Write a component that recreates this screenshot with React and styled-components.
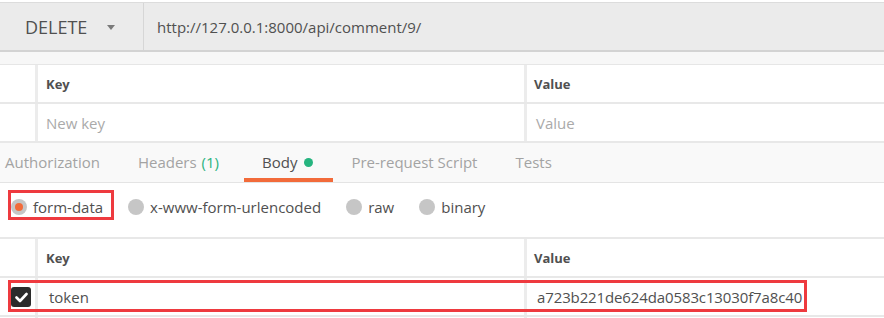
import React from 'react'
import styled, { createGlobalStyle } from 'styled-components';

const GlobalStyle = createGlobalStyle`
    body {
        margin: 0;
        background: #fff;
        font-family: "Open Sans", "Noto Sans", sans-serif;
        color: #505050;
    }
`;

const Page = styled.div`
    padding-top: 2px;
    width: 884px;
    height: 316px;
    overflow: hidden;
`;

const TopBar = styled.div`
    display: flex;
    height: 47px;
    background: #ebebeb;
    border-top: 1px solid #dcdcdc;
    border-bottom: 2px solid #d3d3d3;
`;

const Method = styled.div`
    display: flex;
    align-items: center;
    width: 144px;
    padding-left: 25px;
    box-sizing: border-box;
    border-right: 1px solid #d6d6d6;
    font-size: 18px;
    color: #505050;
`;

const Caret = styled.span`
    width: 0;
    height: 0;
    margin-left: 20px;
    margin-top: 2px;
    border-left: 4px solid transparent;
    border-right: 4px solid transparent;
    border-top: 5px solid #7a7a7a;
`;

const Url = styled.div`
    display: flex;
    align-items: center;
    padding-left: 13px;
    font-size: 15px;
    color: #505050;
`;

const Strip = styled.div`
    height: 12px;
    background: #f7f7f7;
    border-bottom: 1px solid #e6e6e6;
`;

const Row = styled.div`
    position: relative;
    display: grid;
    grid-template-columns: 35px 489px 1fr;
    height: 37px;
    border-bottom: 2px solid #e8e8e8;
    ${p => p.$top && 'border-top: 2px solid #e8e8e8;'}
`;

const Cell = styled.div`
    display: flex;
    align-items: center;
    padding-left: ${p => p.$pad || 8}px;
    border-left: 3px solid #ececec;
    font-size: 15px;
    color: ${p => p.$muted ? '#aaaaaa' : '#505050'};
    letter-spacing: ${p => p.$tight ? '-0.12px' : 'normal'};
    white-space: nowrap;
`;

const HeadCell = styled(Cell)`
    font-size: 13px;
    font-weight: 700;
    padding-top: 1px;
`;

const Lead = styled.div`
    display: flex;
    align-items: center;
    padding-left: 11px;
`;

const Check = styled.span`
    display: flex;
    align-items: center;
    justify-content: center;
    width: 20px;
    height: 20px;
    margin-top: 1px;
    border-radius: 3px;
    background: #2b2b2b;
`;

const Highlight = styled.div`
    position: absolute;
    left: ${p => p.$left}px;
    top: 2px;
    width: ${p => p.$width}px;
    height: 32px;
    box-sizing: border-box;
    border: 3px solid #ee3a3f;
    pointer-events: none;
`;

const Tabs = styled.div`
    display: flex;
    height: 39px;
    background: #f9f9f9;
    border-bottom: 1px solid #e4e4e4;
`;

const Tab = styled.div`
    display: flex;
    align-items: center;
    padding: 2px 20px 0 18px;
    font-size: 15px;
    color: ${p => p.$active ? '#505050' : '#a3a3a3'};
    border-bottom: 4px solid ${p => p.$active ? '#f26b3a' : 'transparent'};
    &:first-child { padding-left: 5px; }
`;

const Count = styled.span`
    color: #2bb37f;
    margin-left: 5px;
    margin-right: 5px;
`;

const Dot = styled.span`
    width: 9px;
    height: 9px;
    margin-left: 7px;
    margin-top: 2px;
    border-radius: 50%;
    background: #26b47f;
`;

const Radios = styled.div`
    display: flex;
    align-items: center;
    height: 54px;
    padding: 0 0 7px 11px;
    box-sizing: border-box;
    gap: 25px;
`;

const RadioItem = styled.label`
    position: relative;
    display: flex;
    align-items: center;
    gap: 6px;
    font-size: 15px;
    color: #505050;
    ${p => p.$marked && `
        &::after {
            content: '';
            position: absolute;
            top: -7px;
            bottom: -3px;
            left: -3px;
            right: -11px;
            border: 3px solid #ee3a3f;
        }
    `}
`;

const Circle = styled.span`
    display: flex;
    align-items: center;
    justify-content: center;
    width: 16px;
    height: 16px;
    border-radius: 50%;
    background: #c6c6c6;
    &::after {
        content: '';
        width: 8px;
        height: 8px;
        border-radius: 50%;
        background: ${p => p.$on ? '#f26b3a' : 'transparent'};
    }
`;

const App = () => {
    return (
        <Page>
            <GlobalStyle />
            <TopBar>
                <Method>DELETE<Caret /></Method>
                <Url>http://127.0.0.1:8000/api/comment/9/</Url>
            </TopBar>
            <Strip />
            <Row>
                <Lead />
                <HeadCell>Key</HeadCell>
                <HeadCell $pad={7}>Value</HeadCell>
            </Row>
            <Row>
                <Lead />
                <Cell $muted>New key</Cell>
                <Cell $muted $pad={9}>Value</Cell>
            </Row>
            <Tabs>
                <Tab>Authorization</Tab>
                <Tab>Headers<Count>(1)</Count></Tab>
                <Tab $active>Body<Dot /></Tab>
                <Tab>Pre-request Script</Tab>
                <Tab>Tests</Tab>
            </Tabs>
            <Radios>
                <RadioItem $marked><Circle $on />form-data</RadioItem>
                <RadioItem><Circle />x-www-form-urlencoded</RadioItem>
                <RadioItem><Circle />raw</RadioItem>
                <RadioItem><Circle />binary</RadioItem>
            </Radios>
            <Row $top>
                <Lead />
                <HeadCell>Key</HeadCell>
                <HeadCell $pad={7}>Value</HeadCell>
            </Row>
            <Row>
                <Lead>
                    <Check>
                        <svg width="13" height="11" viewBox="0 0 13 11">
                            <path d="M1.5 5.5 L5 9 L11.5 2" fill="none" stroke="#fff" strokeWidth="2.6" strokeLinecap="round" strokeLinejoin="round" />
                        </svg>
                    </Check>
                </Lead>
                <Cell $pad={11}>token</Cell>
                <Cell $pad={10} $tight>a723b221de624da0583c13030f7a8c40</Cell>
                <Highlight $left={8} $width={799} />
            </Row>
            <Row>
                <Lead />
                <Cell />
                <Cell />
            </Row>
        </Page>
    )
}

export default App;
